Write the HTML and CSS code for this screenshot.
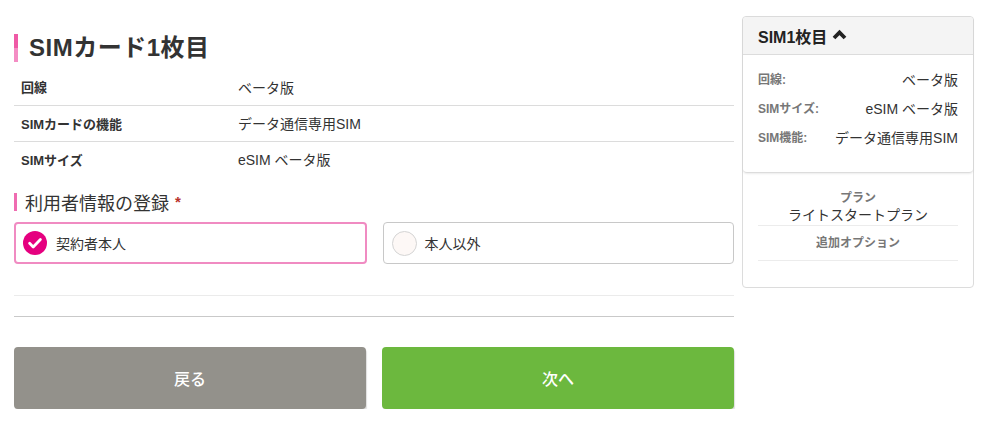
FILE: index.html
```html
<!DOCTYPE html>
<html lang="ja">
<head>
<meta charset="utf-8">
<title>SIMカード1枚目</title>
<link rel="stylesheet" href="styles.css">
</head>
<body>
<div class="page">
  <main class="main">
    <h1 class="title"><span class="title-bar"></span>SIMカード1枚目</h1>
    <table class="info">
      <tr><th>回線</th><td>ベータ版</td></tr>
      <tr><th>SIMカードの機能</th><td>データ通信専用SIM</td></tr>
      <tr><th>SIMサイズ</th><td>eSIM ベータ版</td></tr>
    </table>
    <h2 class="section"><span class="section-bar"></span>利用者情報の登録<span class="req">*</span></h2>
    <div class="choices">
      <label class="choice selected">
        <span class="check">
          <svg width="24" height="24" viewBox="0 0 24 24"><circle cx="12" cy="12" r="12" fill="#e5007f"/><path d="M6.6 12.3l3.6 3.6 7.2-7.4" fill="none" stroke="#fff" stroke-width="2.8" stroke-linecap="round" stroke-linejoin="round"/></svg>
        </span>
        <span class="choice-text">契約者本人</span>
      </label>
      <label class="choice">
        <span class="radio"></span>
        <span class="choice-text">本人以外</span>
      </label>
    </div>
    <div class="rule-light"></div>
    <div class="rule-dark"></div>
    <div class="buttons">
      <button class="btn btn-back">戻る</button>
      <button class="btn btn-next">次へ</button>
    </div>
  </main>
  <aside class="side">
    <div class="side-card">
      <div class="side-head">SIM1枚目
        <svg class="chev" width="15" height="12" viewBox="0 0 15 12"><path d="M2 10L7.5 4.5 13 10" fill="none" stroke="#222" stroke-width="3.8" stroke-linecap="butt" stroke-linejoin="miter"/></svg>
      </div>
      <div class="side-body">
        <div class="side-row"><span class="side-label">回線:</span><span class="side-val">ベータ版</span></div>
        <div class="side-row"><span class="side-label">SIMサイズ:</span><span class="side-val">eSIM ベータ版</span></div>
        <div class="side-row"><span class="side-label">SIM機能:</span><span class="side-val">データ通信専用SIM</span></div>
      </div>
    </div>
    <div class="plan">
      <div class="plan-item first">
        <div class="plan-label">プラン</div>
        <div class="plan-val">ライトスタートプラン</div>
      </div>
      <div class="plan-item">
        <div class="plan-label">追加オプション</div>
      </div>
    </div>
  </aside>
</div>
</body>
</html>
```
FILE: styles.css
```css
* { box-sizing: border-box; }
html, body { margin: 0; padding: 0; background: #fff; }
body {
  font-family: "Liberation Sans", "Noto Sans CJK JP", sans-serif;
  color: #333;
  font-size: 14px;
}
.page {
  display: flex;
  align-items: flex-start;
  gap: 8px;
  padding-left: 14px;
}
.main {
  width: 720px;
  padding-top: 34px;
}
.title {
  display: flex;
  align-items: center;
  margin: 0 0 7px;
  height: 28px;
  font-size: 24px;
  font-weight: bold;
  color: #333;
  letter-spacing: 0.5px;
  line-height: 26px;
}
.title-bar {
  width: 4px;
  height: 28px;
  margin-right: 11px;
  background: linear-gradient(#ef5aa6 0 50%, #f48dc4 50% 100%);
}
.info {
  width: 100%;
  border-collapse: collapse;
}
.info tr { height: 36px; }
.info tr + tr { border-top: 1px solid #dcdcdc; }
.info th {
  width: 224px;
  text-align: left;
  font-size: 13px;
  font-weight: bold;
  padding: 0 0 0 7px;
}
.info td {
  font-size: 14px;
  padding: 0;
}
.section {
  display: flex;
  align-items: center;
  margin: 16px 0 11px;
  height: 18px;
  font-size: 18px;
  font-weight: normal;
  color: #333;
}
.section-bar {
  width: 3px;
  height: 18px;
  background: #ef6cb1;
  margin-right: 8px;
}
.req {
  color: #b8322c;
  font-size: 15px;
  font-weight: bold;
  margin-left: 6px;
  margin-top: -2px;
}
.choices {
  display: flex;
  gap: 16px;
}
.choice {
  flex: 1;
  height: 42px;
  display: flex;
  align-items: center;
  border: 1px solid #c8c8c8;
  border-radius: 4px;
  padding-left: 8px;
}
.choice.selected {
  border: 2px solid #f08bc2;
  padding-left: 7px;
}
.check { display: flex; width: 24px; height: 24px; }
.radio {
  width: 25px;
  height: 25px;
  border-radius: 50%;
  border: 1px solid #d4d4d4;
  background: #fdf8f6;
}
.choice-text {
  margin-left: 9px;
  font-size: 14px;
}
.choice .radio + .choice-text { margin-left: 8px; }
.rule-light {
  margin-top: 31px;
  height: 1px;
  background: #ebebeb;
}
.rule-dark {
  margin-top: 20px;
  height: 1px;
  background: #c9c9c9;
}
.buttons {
  display: flex;
  gap: 16px;
  margin-top: 30px;
}
.btn {
  flex: 1;
  height: 62px;
  border: 0;
  border-radius: 4px;
  color: #fff;
  font-family: "Noto Sans CJK JP", sans-serif;
  font-size: 16px;
  font-weight: 500;
  box-shadow: 1px 2px 1px rgba(0,0,0,0.13);
}
.btn-back { background: #93918b; }
.btn-next { background: #6cb83e; }
.side {
  width: 232px;
  margin-top: 16px;
  border: 1px solid #dcdcdc;
  border-radius: 4px;
}
.side-card {
  border-bottom: 1px solid #dcdcdc;
  border-radius: 0 0 4px 4px;
  box-shadow: 0 1px 2px rgba(0,0,0,0.08);
}
.side-head {
  height: 38px;
  display: flex;
  align-items: center;
  padding-left: 15px;
  background: #f4f4f4;
  border-bottom: 1px solid #dcdcdc;
  border-radius: 4px 4px 0 0;
  font-size: 16px;
  font-weight: bold;
  color: #222;
}
.chev { margin-left: 5px; margin-top: -4px; }
.side-body {
  padding: 9px 15px 21px;
}
.side-row {
  display: flex;
  justify-content: space-between;
  align-items: center;
  height: 29px;
}
.side-label {
  font-size: 12px;
  font-weight: bold;
  color: #777;
}
.side-val {
  font-size: 14px;
  color: #333;
}
.plan {
  padding: 17px 15px 26px;
  text-align: center;
}
.plan-item {
  border-bottom: 1px solid #ececec;
}
.plan-item.first { padding-bottom: 1px; }
.plan-item + .plan-item { padding: 9px 0; }
.plan-label {
  font-size: 12px;
  font-weight: bold;
  color: #777;
  line-height: 16px;
}
.plan-val {
  font-size: 14px;
  line-height: 18px;
  color: #333;
}
```
